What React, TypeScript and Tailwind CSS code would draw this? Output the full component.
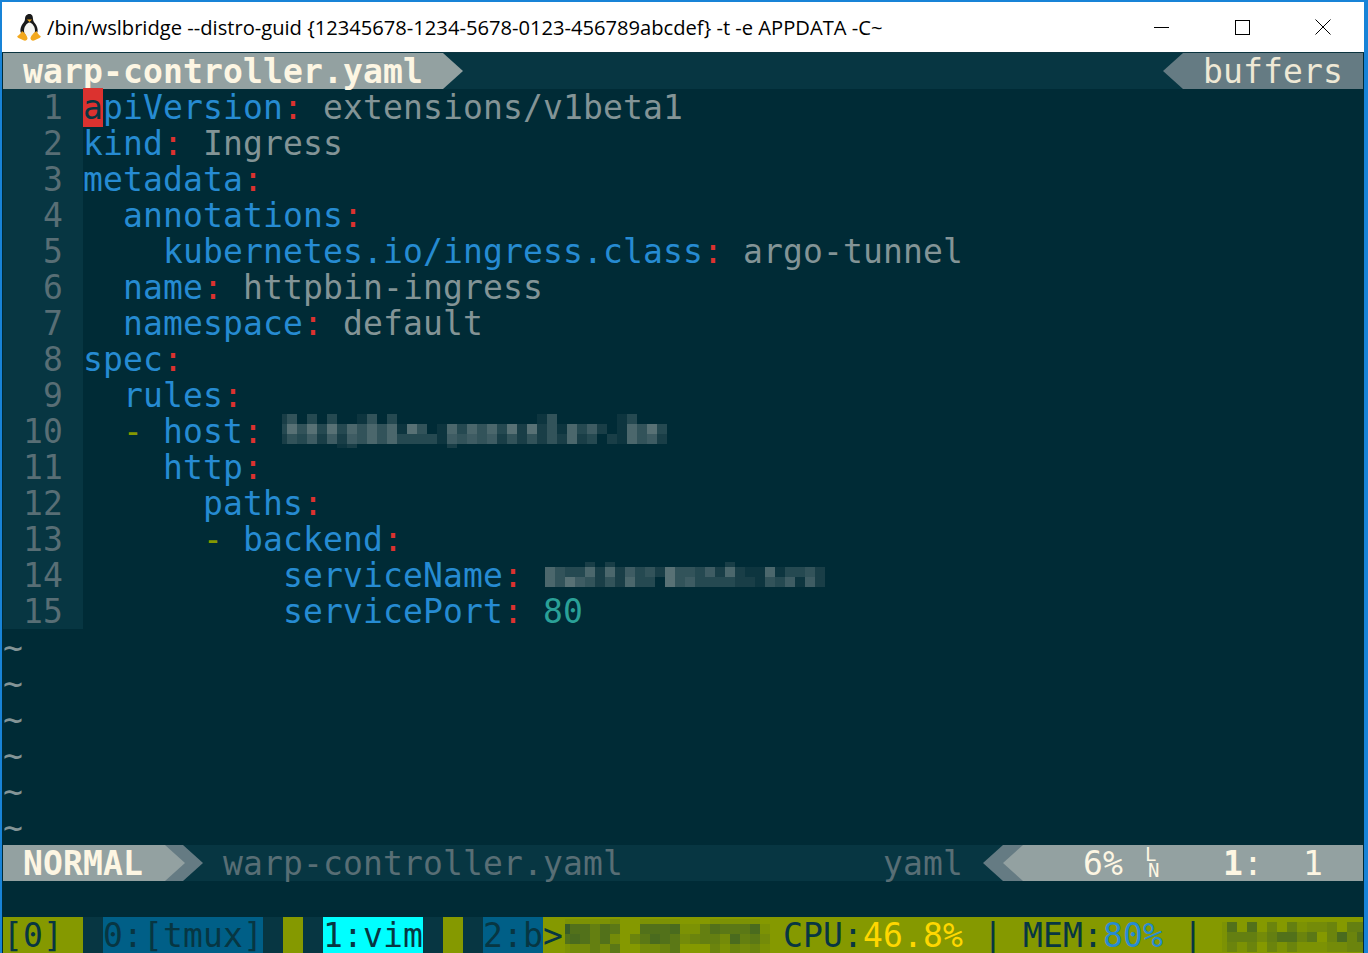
import React from 'react';

// mosaics: one digit per block, 0 = nothing, 9 = strongest
const HOST_BLUR = [
  '2' + '40303001403' + '00000000000000' + '14' + '000000' + '13' + '000',
  '3' + '7473736464617401636' + '4637272416352016473',
  '2' + '4352525464633331545' + '4524242426230216452',
  '0' + '00000120000000002' + '000000000000000000000',
];
const NAME_BLUR = [
  '0' + '0000202' + '00000000000' + '2' + '000000000',
  '0' + '6433626253427443526211613342',
  '0' + '6475424263307453333221435152',
];
const BAR_BLUR_LEFT = [
  '1' + '11112001111000111110',
  '9' + '66465006667114655571',
  '6' + '76462035765234427452',
  '1' + '22425002235000313231',
];
const BAR_BLUR_RIGHT = [
  '1' + '60603041223044',
  '1' + '44424663503736',
  '1' + '31303131112233',
];

const Mosaic = ({
  rows,
  heights,
  color,
  strength,
  className,
}: {
  rows: string[];
  heights: number[];
  color: string;
  strength: number;
  className?: string;
}) => {
  const width = 5 + (rows[0].length - 1) * 10;
  const height = heights.reduce((a, b) => a + b, 0);
  let y = 0;
  return (
    <svg width={width} height={height} className={className}>
      {rows.map((row, r) => {
        const top = y;
        y += heights[r];
        return row.split('').map((d, i) =>
          d === '0' ? null : (
            <rect
              key={`${r}-${i}`}
              x={i === 0 ? 0 : 5 + (i - 1) * 10}
              y={top}
              width={i === 0 ? 5 : 10}
              height={heights[r]}
              fill={color}
              fillOpacity={Number(d) * strength}
            />
          ),
        );
      })}
    </svg>
  );
};

const Key = ({ children }: { children: string }) => (
  <>
    <span className="text-[#268bd2]">{children}</span>
    <span className="text-[#dc322f]">:</span>
  </>
);
const Val = ({ children }: { children: string }) => <span className="text-[#839496]">{children}</span>;
const Dash = () => <span className="text-[#859900]">-</span>;

const Line = ({ num, blur, children }: { num: number; blur?: React.ReactNode; children: React.ReactNode }) => (
  <div className="flex h-[36px]">
    <div className="w-[80px] shrink-0 bg-[#073642] pr-[20px] text-right text-[#586e75]">{num}</div>
    <div className="flex items-start whitespace-pre">
      <span>{children}</span>
      {blur}
    </div>
  </div>
);

const Chevron = ({ fill, left, className }: { fill: string; left?: boolean; className?: string }) => (
  <svg width="20" height="36" viewBox="0 0 20 36" className={`shrink-0 ${className ?? ''}`}>
    <polygon points={left ? '20,0 0,18 20,36' : '0,0 20,18 0,36'} fill={fill} />
  </svg>
);

const Penguin = () => (
  <svg width="24" height="27" viewBox="0 0 24 27" className="shrink-0">
    <path d="M12.500 0c-3.200 0-4.500 2.500-4.500 5 0 2-1 3-2.500 5C4 12 3 15 3.500 18l2 3h13l2-3c.5-3-.5-6-2-8-1.500-2-2.500-3-2.500-5 0-2.500-.8-5-3.500-5z" fill="#1a1a1a" />
    <path d="M12.500 8.500c-3 .5-5.500 4.500-5.500 8s2 6 5.500 6 5.500-2.500 5.500-6-2.500-7.500-5.500-8z" fill="#f6f6f2" />
    <path d="M10 5.500h5l-2.500 2.500z" fill="#f0a818" />
    <path d="M5 17c-1 2.500-3 4-4.500 5-.5.5 0 1.500 1 2l5.500 2.500c1.500.5 3.500-.5 3.500-2 0-2.500-3-6-5.500-7.500z" fill="#f3a81c" />
    <path d="M19.500 17c1 2.500 2.500 4 4 5 .5.5 0 1.500-1 2l-5.500 2.500c-1.500.5-3.500-.5-3.500-2 0-2.500 3.500-6 6-7.500z" fill="#f3a81c" />
  </svg>
);

const TitleBar = () => (
  <div className="flex h-[50px] shrink-0 items-center bg-white pl-[15px] text-black">
    <Penguin />
    <div className="ml-[6px] flex-1 whitespace-nowrap font-['Open_Sans',sans-serif] text-[20.15px] leading-[50px]">
      /bin/wslbridge --distro-guid {'{12345678-1234-5678-0123-456789abcdef}'} -t -e APPDATA -C~
    </div>
    <div className="flex items-center">
      <div className="h-[1px] w-[15px] bg-black" />
      <div className="ml-[66px] h-[15px] w-[15px] border border-black" />
      <svg width="16" height="16" viewBox="0 0 16 16" className="ml-[65px] mr-[33px]">
        <path d="M.5.500l15 15M15.500.500l-15 15" stroke="#000" strokeWidth="1" fill="none" />
      </svg>
    </div>
  </div>
);

const App = () => (
  <div className="flex h-[953px] w-[1368px] flex-col overflow-hidden border-l-2 border-r-4 border-t-2 border-[#1883d7] bg-[#002b36]">
    <TitleBar />
    <div className="h-[1px] shrink-0 bg-[#0b3440]" />
    <div className="flex-1 overflow-hidden pl-[1px] pr-[1px] font-['DejaVu_Sans_Mono',monospace] text-[33px] leading-[38px] tracking-[0.13px]">
      {/* tabline */}
      <div className="flex h-[36px] bg-[#073642]">
        <div className="w-[440px] whitespace-pre bg-[#93a1a1] font-bold text-[#fdf6e3]"> warp-controller.yaml</div>
        <Chevron fill="#93a1a1" />
        <div className="flex-1" />
        <Chevron fill="#657b83" left />
        <div className="w-[180px] whitespace-pre bg-[#657b83] text-[#eee8d5]"> buffers</div>
      </div>

      <Line num={1}>
        <span className="bg-[#dc322f] text-[#073642]">a</span>
        <Key>piVersion</Key> <Val>extensions/v1beta1</Val>
      </Line>
      <Line num={2}>
        <Key>kind</Key> <Val>Ingress</Val>
      </Line>
      <Line num={3}>
        <Key>metadata</Key>
      </Line>
      <Line num={4}>
        {'  '}
        <Key>annotations</Key>
      </Line>
      <Line num={5}>
        {'    '}
        <Key>kubernetes.io/ingress.class</Key> <Val>argo-tunnel</Val>
      </Line>
      <Line num={6}>
        {'  '}
        <Key>name</Key> <Val>httpbin-ingress</Val>
      </Line>
      <Line num={7}>
        {'  '}
        <Key>namespace</Key> <Val>default</Val>
      </Line>
      <Line num={8}>
        <Key>spec</Key>
      </Line>
      <Line num={9}>
        {'  '}
        <Key>rules</Key>
      </Line>
      <Line
        num={10}
        blur={
          <Mosaic rows={HOST_BLUR} heights={[10, 10, 10, 4]} color="#93a1a1" strength={0.085} className="ml-[19px] mt-[1px]" />
        }
      >
        {'  '}
        <Dash /> <Key>host</Key>
      </Line>
      <Line num={11}>
        {'    '}
        <Key>http</Key>
      </Line>
      <Line num={12}>
        {'      '}
        <Key>paths</Key>
      </Line>
      <Line num={13}>
        {'      '}
        <Dash /> <Key>backend</Key>
      </Line>
      <Line
        num={14}
        blur={<Mosaic rows={NAME_BLUR} heights={[5, 10, 10]} color="#93a1a1" strength={0.085} className="ml-[17px] mt-[5px]" />}
      >
        {'          '}
        <Key>serviceName</Key>
      </Line>
      <Line num={15}>
        {'          '}
        <Key>servicePort</Key> <span className="text-[#2aa198]">80</span>
      </Line>

      {[0, 1, 2, 3, 4, 5].map((i) => (
        <div key={i} className="h-[36px] text-[#839496]">
          ~
        </div>
      ))}

      {/* vim status line */}
      <div className="flex h-[36px] bg-[#073642] whitespace-pre">
        <div className="w-[160px] bg-[#93a1a1] font-bold text-[#fdf6e3]"> NORMAL</div>
        <svg width="40" height="36" viewBox="0 0 40 36" className="shrink-0">
          <polygon points="0,0 20,0 40,18 20,36 0,36" fill="#657b83" />
          <polygon points="0,0 2,0 22,18 2,36 0,36" fill="#93a1a1" />
        </svg>
        <div className="ml-[20px] w-[400px] text-[#586e75]">warp-controller.yaml</div>
        <div className="flex-1" />
        <div className="w-[80px] text-[#586e75]">yaml</div>
        <div className="w-[20px]" />
        <svg width="40" height="36" viewBox="0 0 40 36" className="shrink-0">
          <polygon points="0,18 20,0 40,0 40,36 20,36" fill="#657b83" />
          <polygon points="20,18 40,0 40,36" fill="#93a1a1" />
        </svg>
        <div className="flex w-[340px] bg-[#93a1a1] text-[#fdf6e3]">
          <span className="w-[60px]" />
          <span className="w-[60px]">6%</span>
          <span className="mt-[1px] flex h-[34px] w-[80px] flex-col text-[19px] leading-[16px] tracking-normal">
            <span className="pl-[2px]">L</span>
            <span className="pl-[5px]">N</span>
          </span>
          <span className="w-[40px]">
            <span className="font-bold">1</span>:
          </span>
          <span className="w-[40px]" />
          <span className="w-[20px]">1</span>
        </div>
      </div>

      <div className="h-[36px]" />

      {/* tmux status */}
      <div className="flex h-[36px] whitespace-pre bg-[#859900] text-[#073642]">
        <div className="w-[80px] shrink-0">[0]</div>
        <div className="w-[20px] shrink-0 bg-[#073642]" />
        <div className="w-[160px] shrink-0 bg-[#005f87]">0:[tmux]</div>
        <div className="w-[20px] shrink-0 bg-[#073642]" />
        <div className="w-[20px] shrink-0" />
        <div className="w-[20px] shrink-0 bg-[#073642]" />
        <div className="w-[100px] shrink-0 bg-[#00ffff]">1:vim</div>
        <div className="w-[20px] shrink-0 bg-[#073642]" />
        <div className="w-[20px] shrink-0" />
        <div className="w-[20px] shrink-0 bg-[#073642]" />
        <div className="w-[60px] shrink-0 bg-[#005f87]">2:b</div>
        <div className="w-[20px] shrink-0">&gt;</div>
        <div className="w-[220px] shrink-0 pl-[2px]">
          <Mosaic rows={BAR_BLUR_LEFT} heights={[5, 10, 10, 9]} color="#31572b" strength={0.1} className="mt-[2px]" />
        </div>
        <div className="w-[439px] shrink-0">
          CPU:<span className="text-[#ffd700]">46.8%</span> | MEM:<span className="text-[#268bd2]">80%</span> |
        </div>
        <div className="min-w-0 flex-1 overflow-hidden">
          <Mosaic rows={BAR_BLUR_RIGHT} heights={[10, 10, 10]} color="#31572b" strength={0.1} className="mt-[5px]" />
        </div>
      </div>
    </div>
  </div>
);

export default App;
